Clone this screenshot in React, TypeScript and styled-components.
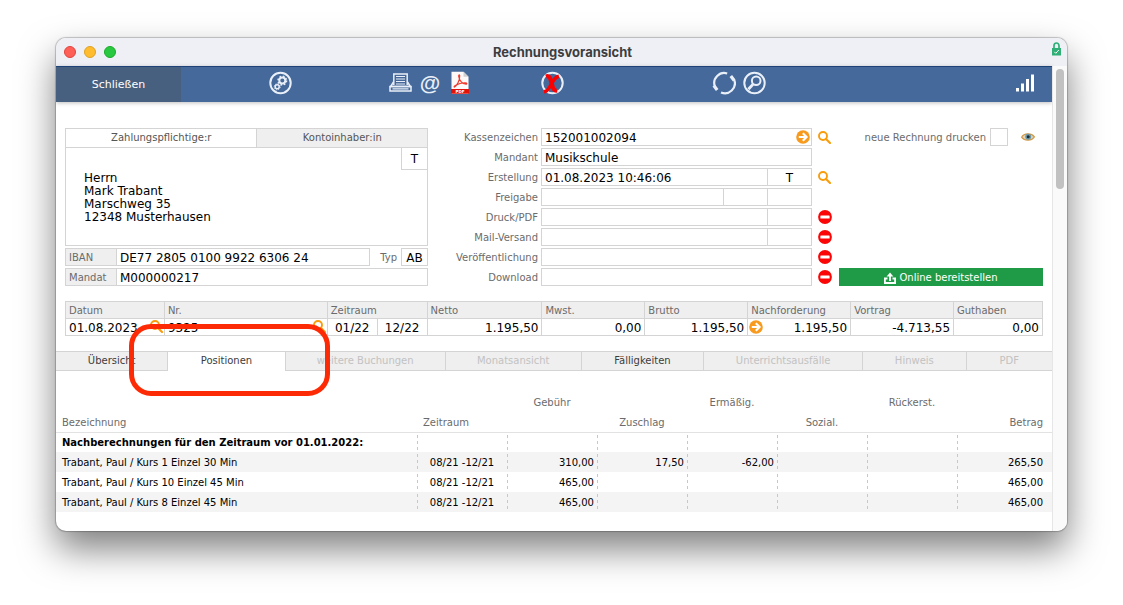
import React from "react";
import styled, { createGlobalStyle, css } from "styled-components";

const line = "#d4d4d4";
const panel = "#efefef";
const muted = "#6b6b6b";
const orange = "#f79a1e";

const GlobalStyle = createGlobalStyle`
  *, *::before, *::after { box-sizing: border-box; }
  body {
    margin: 0;
    background: #fff;
    color: #000;
    font: 10px/16px Verdana, "DejaVu Sans", sans-serif;
  }
  button, input, textarea { font: inherit; color: inherit; margin: 0; padding: 0; border-radius: 0; }
  button { border: 0; background: none; cursor: pointer; }
  svg { display: block; }
`;

const Desktop = styled.div`
  padding: 38px 56px 74px;
`;

const Window = styled.div`
  border-radius: 10px;
  overflow: hidden;
  background: #fff;
  box-shadow: 0 0 1px 1px rgba(0, 0, 0, 0.22), 0 18px 36px rgba(0, 0, 0, 0.5);
`;

const TitleBar = styled.header`
  display: grid;
  grid-template-columns: 1fr auto 1fr;
  align-items: center;
  height: 28px;
  padding: 0 6px 0 8px;
  background: #eff0f5;
`;

const Lights = styled.div`
  display: flex;
  gap: 8px;
`;

const Light = styled.button<{ $fill: string; $edge: string }>`
  width: 12px;
  height: 12px;
  border: 1px solid ${(p) => p.$edge};
  border-radius: 50%;
  background: ${(p) => p.$fill};
`;

const Title = styled.h1`
  margin: 0;
  font: 700 13px/16px Inter, sans-serif;
  color: #3d3d3f;
`;

const LockSlot = styled.div`
  justify-self: end;
  align-self: start;
  padding-top: 4px;
`;

const Body = styled.div`
  display: flex;
`;

const Main = styled.main`
  flex: 1;
  min-width: 0;
  padding-bottom: 19px;
`;

const ScrollTrack = styled.div`
  width: 15px;
  padding: 3px;
  border-left: 1px solid #e6e6e6;
  background: #fafafa;
`;

const ScrollThumb = styled.div`
  width: 8px;
  height: 120px;
  border-radius: 4px;
  background: #c1c1c1;
`;

const Toolbar = styled.div`
  display: flex;
  align-items: center;
  height: 36px;
  padding-right: 12px;
  border-top: 1px solid #1f4277;
  background: #44699a;
  color: #e9eff8;
  box-shadow: 0 1px 4px rgba(0, 0, 0, 0.25);
`;

const CloseButton = styled.button`
  width: 125px;
  height: 100%;
  background: #48607f;
  color: #fff;
  font-size: 11px;
`;

const ToolButton = styled.button`
  display: grid;
  place-items: center;
  width: 30px;
  height: 30px;
  padding-bottom: 4px;
`;

const AtGlyph = styled.span`
  font: 700 21px/24px "Liberation Sans", Arial, sans-serif;
`;

const Spacer = styled.div<{ $grow: number }>`
  flex: ${(p) => p.$grow} 1 0;
`;

const Form = styled.section`
  display: grid;
  grid-template-columns: 363fr 411fr 204fr;
  padding: 26px 9px 0;
`;

const Stack = styled.div`
  display: flex;
  flex-direction: column;
  gap: 2px;
  min-width: 0;
`;

const PayerBox = styled.div`
  height: 118px;
  border: 1px solid ${line};
`;

const PayerTabs = styled.div`
  display: flex;
  height: 19px;
  border-bottom: 1px solid ${line};
`;

const PayerTab = styled.button<{ $active?: boolean }>`
  flex: ${(p) => (p.$active ? 191 : 170)};
  color: #555;
  ${(p) => !p.$active && css`background: ${panel}; border-left: 1px solid ${line};`}
`;

const AddressArea = styled.div`
  display: flex;
  align-items: flex-start;
`;

const Address = styled.textarea`
  flex: 1;
  min-width: 0;
  height: 96px;
  padding: 24px 0 0 18px;
  border: 0;
  outline: 0;
  resize: none;
  font-size: 12px;
  line-height: 13px;
  white-space: pre;
`;

const AddressType = styled.button`
  width: 26px;
  height: 22px;
  border: solid ${line};
  border-width: 0 0 1px 1px;
  font-size: 12px;
`;

const Row = styled.div`
  display: flex;
  align-items: center;
  height: 18px;
`;

const BoxLabel = styled.label`
  width: 51px;
  height: 18px;
  padding: 1px 0 0 3px;
  border: solid ${line};
  border-width: 1px 0 1px 1px;
  background: ${panel};
  color: ${muted};
`;

const TypeLabel = styled.label`
  width: 31px;
  padding: 2px 4px 0 0;
  text-align: right;
  color: ${muted};
`;

const Field = styled.input<{ $w?: number; $center?: boolean }>`
  flex: ${(p) => (p.$w ? `0 0 ${p.$w}px` : "1 1 0")};
  min-width: 0;
  height: 18px;
  padding: 2px 3px 0;
  border: 1px solid ${line};
  outline: 0;
  background: #fff;
  font-size: 12px;
  text-align: ${(p) => (p.$center ? "center" : "left")};
  & + & { margin-left: -1px; }
`;

const FieldWrap = styled.div`
  position: relative;
  display: flex;
  flex: 1;
  min-width: 0;
`;

const FieldAction = styled.button`
  position: absolute;
  top: 2px;
  right: 2px;
`;

const RowLabel = styled.label`
  width: 113px;
  padding: 2px 3px 0 0;
  text-align: right;
  color: ${muted};
`;

const IconSlot = styled.div`
  display: grid;
  place-items: center;
  width: 27px;
  padding-right: 2px;
`;

const SideColumn = styled.div`
  display: flex;
  flex-direction: column;
  justify-content: space-between;
`;

const PrintRow = styled.div`
  display: flex;
  align-items: center;
  justify-content: flex-end;
  height: 18px;
  padding-right: 8px;
  color: ${muted};
`;

const PrintLabel = styled.label`
  padding-top: 2px;
`;

const CheckBox = styled.input`
  appearance: none;
  width: 18px;
  height: 18px;
  margin: 0 13px 0 4px;
  border: 1px solid ${line};
  background: #fff;
`;

const PublishButton = styled.button`
  display: flex;
  align-items: center;
  justify-content: center;
  gap: 3px;
  height: 18px;
  padding-top: 1px;
  background: #1f9b48;
  color: #fff;
`;

const Sums = styled.div`
  padding: 15px 9px 0;
`;

const SumTable = styled.table`
  width: 100%;
  table-layout: fixed;
  border-collapse: collapse;
  th, td { padding: 0 3px; border: 1px solid ${line}; }
  th {
    height: 17px;
    padding-top: 1px;
    line-height: 15px;
    background: ${panel};
    color: ${muted};
    font-weight: 400;
    text-align: left;
  }
  td { height: 17px; font-size: 12px; line-height: 16px; white-space: nowrap; }
`;

const Cell = styled.div<{ $align?: string }>`
  display: flex;
  align-items: center;
  justify-content: ${(p) => p.$align ?? "space-between"};
  height: 16px;
  padding-top: 1px;
`;

const CellIcon = styled.button<{ $side: "left" | "right" }>`
  margin-${(p) => p.$side}: -2px;
  padding-bottom: 2px;
`;

const Tabs = styled.nav`
  display: flex;
  height: 20px;
  margin-top: 15px;
`;

const TabSlot = styled.div<{ $grow: number }>`
  position: relative;
  display: flex;
  flex: ${(p) => p.$grow} 1 0;
  min-width: 0;
  & + & { border-left: 1px solid ${line}; }
`;

const Tab = styled.button<{ $state?: "active" | "off" }>`
  flex: 1;
  min-width: 0;
  border: solid ${line};
  border-width: 1px 0 ${(p) => (p.$state === "active" ? 0 : 1)}px;
  background: ${(p) => (p.$state === "active" ? "#fff" : panel)};
  color: ${(p) => (p.$state === "off" ? "#c2c2c2" : "#3c3c3c")};
  line-height: 16px;
  padding-bottom: ${(p) => (p.$state === "active" ? 1 : 0)}px;
`;

const Marker = styled.span`
  position: absolute;
  z-index: 2;
  inset: -27px -45px -25px -39px;
  border: 5px solid #fd2b05;
  border-radius: 22px;
  pointer-events: none;
`;

const Items = styled.table`
  width: 100%;
  margin-top: 20px;
  table-layout: fixed;
  border-collapse: collapse;
  th, td { padding: 0 6px; white-space: nowrap; }
  thead th {
    height: 41px;
    padding-top: 4px;
    padding-bottom: 1px;
    border-bottom: 1px solid #e2e2e2;
    color: ${muted};
    font-weight: 400;
  }
  tbody tr:nth-child(even) { background: #f4f4f4; }
  td { height: 20px; }
  td:first-child { padding-top: 2px; text-align: left; }
  td + td {
    padding: 2px 3px 0;
    text-align: right;
    background: repeating-linear-gradient(to bottom, #c8c8c8 0 3px, transparent 3px 6px) 0 2px / 1px 17px no-repeat;
  }
  td:nth-child(2) { text-align: center; }
  td:last-child { padding-right: 9px; }
`;

const HeadCell = styled.th<{ $low?: boolean; $align?: string }>`
  vertical-align: ${(p) => (p.$low ? "bottom" : "top")};
  text-align: ${(p) => p.$align ?? "center"};
  &:last-child { padding-right: 9px; }
`;

const Magnifier = () => (
  <svg width="13" height="13" viewBox="0 0 13 13" fill="none" stroke="#f99d0c">
    <circle cx="5" cy="5" r="4" strokeWidth="1.9" />
    <path d="M8 8l4 4" strokeWidth="2.200" strokeLinecap="round" />
  </svg>
);

const ArrowBadge = () => (
  <svg width="14" height="14" viewBox="0 0 14 14">
    <circle cx="7" cy="7" r="6.8" fill={orange} />
    <path d="M2.800 7h7.400M6.800 3.200L10.600 7 6.800 10.800" fill="none" stroke="#fff" strokeWidth="2.100" />
  </svg>
);

const NoEntry = () => (
  <svg width="14" height="14" viewBox="0 0 14 14">
    <circle cx="7" cy="7" r="6.900" fill="#fb0606" />
    <rect x="2.400" y="5.600" width="9.200" height="3" rx=".4" fill="#fff" />
  </svg>
);

const Eye = () => (
  <svg width="14" height="10" viewBox="0 0 14 10">
    <path d="M.6 5.2C3 .8 10.500.8 13.400 4.800 10.500 9.200 3.500 9.200.6 5.200z" fill="#e0d6c0" stroke="#d19a4a" strokeWidth="1.200" />
    <circle cx="7.200" cy="4.700" r="3" fill="#6a98a8" />
    <circle cx="7.200" cy="4.700" r="1.500" fill="#1c2b30" />
  </svg>
);

const Lock = () => (
  <svg width="9" height="14" viewBox="0 0 9 14">
    <path d="M2 7V3.800a2.500 2.800 0 0 1 5 0V7" fill="none" stroke="#2fae76" strokeWidth="1.700" />
    <rect y="6" width="9" height="7.500" fill="#2fae76" />
    <path d="M2.300 9.800l1.500 1.500 3-3.300" fill="none" stroke="#fff" strokeWidth="1" />
  </svg>
);

const Upload = () => (
  <svg width="12" height="12" viewBox="0 0 12 12" fill="none" stroke="#fff" strokeWidth="1.800">
    <path d="M3.500 6.500H.9V11h10.200V6.500H8.500" />
    <path d="M6 9V3" />
    <path d="M2.600 4.500L6 .6l3.400 3.900z" fill="#fff" stroke="none" />
  </svg>
);

const Gears = () => (
  <svg width="24" height="24" viewBox="0 0 24 24" fill="none" stroke="currentColor">
    <circle cx="12.500" cy="12" r="10.200" strokeWidth="2" />
    <circle cx="14.300" cy="9.600" r="3" strokeWidth="2" />
    <circle cx="14.300" cy="9.600" r="4.300" strokeWidth="1.500" strokeDasharray="1.700 1.680" />
    <circle cx="9.200" cy="15.800" r="2" strokeWidth="1.500" />
    <circle cx="9.200" cy="15.800" r="3" strokeWidth="1" strokeDasharray="1.200 1.150" />
  </svg>
);

const PrinterIcon = () => (
  <svg width="24" height="24" viewBox="0 0 24 24" fill="none" stroke="currentColor" strokeWidth="1.500">
    <path d="M5.800 14V3h13.400v11" />
    <path d="M8 5.500h9M8 8h9M8 10.500h9M8 13h9" strokeWidth="1.200" />
    <path d="M5.500 11L2.600 15.500h19.800L19.500 11" />
    <rect x="2" y="15.500" width="21" height="4.500" />
    <path d="M4.500 17.800h16" strokeWidth="1.200" />
  </svg>
);

const PdfLabel = styled.text`
  font: 700 4px "DejaVu Sans", sans-serif;
  fill: #fff;
`;

const PdfIcon = () => (
  <svg width="20" height="24" viewBox="0 0 20 24">
    <path d="M1.500.8h12l5 5V23h-17z" fill="#fdf9f8" />
    <path d="M13.500.8v5h5z" fill="#cfcfcf" />
    <path d="M4.500 16c2.500-1.500 5.500-6.500 5.200-11.500C9.500 3.500 8.500 4 8.700 5.500c.5 3.500 3.300 7.500 7.300 7.700 1.300 0 1-1.300-.5-1.400-3.500-.2-7 .8-10.200 2.700-1.500 1-1.300 1.800-.8 1.500z" fill="none" stroke="#ef3b2d" strokeWidth="1.200" />
    <path d="M1 18h18v4.800H1z" fill="#e3120b" />
    <PdfLabel x="10" y="22" textAnchor="middle">PDF</PdfLabel>
  </svg>
);

const CancelIcon = () => (
  <svg width="24" height="24" viewBox="0 0 24 24" fill="none">
    <circle cx="12.500" cy="12" r="10.200" stroke="currentColor" strokeWidth="2" />
    <path d="M6 5.500c3.500-1.500 4.500 2 6 8 1 4.500 2 6.500 5 6" stroke="#fa0000" strokeWidth="4.200" />
    <path d="M18.800 5.200c-3.500.5-5.500 4-8.300 9.300-1.700 3.300-3 6-6.500 6.300" stroke="#fa0000" strokeWidth="3.400" />
  </svg>
);

const RefreshIcon = () => (
  <svg width="24" height="24" viewBox="0 0 24 24" fill="none" stroke="currentColor" strokeWidth="2.200">
    <path d="M15.200 2.500A10 10 0 0 0 2.700 15" />
    <path d="M9 21.500A10 10 0 0 0 22.300 9" />
    <path d="M18.800 5l3.400 4.500M5.200 19L1.800 14.500" strokeWidth="3.200" />
  </svg>
);

const SearchCircle = () => (
  <svg width="24" height="24" viewBox="0 0 24 24" fill="none" stroke="currentColor">
    <circle cx="12.500" cy="12" r="10.200" strokeWidth="2" />
    <circle cx="14.200" cy="9.800" r="4.300" strokeWidth="2" />
    <path d="M11 13.200l-4.600 5" strokeWidth="2.800" />
  </svg>
);

const Signal = () => (
  <svg width="20" height="20" viewBox="0 0 20 20" fill="#fff">
    <path d="M1 15h3v3.500H1zM6 10.500h3v8H6zM11 6h3v12.500h-3zM16 1.500h3v17h-3z" />
  </svg>
);

type FieldRow = { label: string; value?: string; extra?: string[]; icon?: "search" | "stop"; go?: boolean };

const fieldRows: FieldRow[] = [
  { label: "Kassenzeichen", value: "152001002094", icon: "search", go: true },
  { label: "Mandant", value: "Musikschule" },
  { label: "Erstellung", value: "01.08.2023 10:46:06", extra: ["T"], icon: "search" },
  { label: "Freigabe", extra: ["", ""] },
  { label: "Druck/PDF", extra: [""], icon: "stop" },
  { label: "Mail-Versand", extra: [""], icon: "stop" },
  { label: "Veröffentlichung", icon: "stop" },
  { label: "Download", icon: "stop" },
];

const tabs: { label: string; grow: number; state?: "active" | "off" }[] = [
  { label: "Übersicht", grow: 112 },
  { label: "Positionen", grow: 117, state: "active" },
  { label: "weitere Buchungen", grow: 160, state: "off" },
  { label: "Monatsansicht", grow: 136, state: "off" },
  { label: "Fälligkeiten", grow: 122 },
  { label: "Unterrichtsausfälle", grow: 159, state: "off" },
  { label: "Hinweis", grow: 103, state: "off" },
  { label: "PDF", grow: 86, state: "off" },
];

const sumCols = [99, 163, 50, 50, 115, 103, 103, 103, 103, 89];
const itemCols = [361, 90, 90, 90, 90, 90, 90, 95];

const items = [
  ["Trabant, Paul / Kurs 1 Einzel 30 Min", "08/21 -12/21", "310,00", "17,50", "-62,00", "", "", "265,50"],
  ["Trabant, Paul / Kurs 10 Einzel 45 Min", "08/21 -12/21", "465,00", "", "", "", "", "465,00"],
  ["Trabant, Paul / Kurs 8 Einzel 45 Min", "08/21 -12/21", "465,00", "", "", "", "", "465,00"],
];

const percentCols = (widths: number[]) => {
  const total = widths.reduce((a, b) => a + b, 0);
  return (
    <colgroup>
      {widths.map((w, i) => (
        <col key={i} style={{ width: `${(w / total) * 100}%` }} />
      ))}
    </colgroup>
  );
};

export default function App() {
  return (
    <Desktop>
      <GlobalStyle />
      <Window>
        <TitleBar>
          <Lights>
            <Light aria-label="Fenster schließen" $fill="#fe5f57" $edge="#e0443e" />
            <Light aria-label="Minimieren" $fill="#febc2e" $edge="#dea123" />
            <Light aria-label="Maximieren" $fill="#28c840" $edge="#1aab29" />
          </Lights>
          <Title>Rechnungsvoransicht</Title>
          <LockSlot><Lock /></LockSlot>
        </TitleBar>
        <Body>
          <Main>
            <Toolbar>
              <CloseButton>Schließen</CloseButton>
              <Spacer $grow={84} />
              <ToolButton aria-label="Einstellungen"><Gears /></ToolButton>
              <Spacer $grow={90} />
              <ToolButton aria-label="Drucken"><PrinterIcon /></ToolButton>
              <ToolButton aria-label="E-Mail"><AtGlyph>@</AtGlyph></ToolButton>
              <ToolButton aria-label="PDF erzeugen"><PdfIcon /></ToolButton>
              <Spacer $grow={62} />
              <ToolButton aria-label="Stornieren"><CancelIcon /></ToolButton>
              <Spacer $grow={142} />
              <ToolButton aria-label="Aktualisieren"><RefreshIcon /></ToolButton>
              <ToolButton aria-label="Suchen"><SearchCircle /></ToolButton>
              <Spacer $grow={241} />
              <ToolButton aria-label="Statistik"><Signal /></ToolButton>
            </Toolbar>

            <Form>
              <Stack>
                <PayerBox>
                  <PayerTabs>
                    <PayerTab $active>Zahlungspflichtige:r</PayerTab>
                    <PayerTab>Kontoinhaber:in</PayerTab>
                  </PayerTabs>
                  <AddressArea>
                    <Address
                      aria-label="Anschrift"
                      defaultValue={"Herrn\nMark Trabant\nMarschweg 35\n12348 Musterhausen"}
                    />
                    <AddressType>T</AddressType>
                  </AddressArea>
                </PayerBox>
                <Row>
                  <BoxLabel htmlFor="iban">IBAN</BoxLabel>
                  <Field id="iban" defaultValue="DE77 2805 0100 9922 6306 24" />
                  <TypeLabel htmlFor="typ">Typ</TypeLabel>
                  <Field id="typ" $w={27} $center defaultValue="AB" />
                </Row>
                <Row>
                  <BoxLabel htmlFor="mandat">Mandat</BoxLabel>
                  <Field id="mandat" defaultValue="M000000217" />
                </Row>
              </Stack>

              <Stack>
                {fieldRows.map((row, i) => (
                  <Row key={row.label}>
                    <RowLabel htmlFor={`field-${i}`}>{row.label}</RowLabel>
                    <FieldWrap>
                      <Field id={`field-${i}`} defaultValue={row.value ?? ""} />
                      {row.extra?.map((v, k) => (
                        <Field key={k} aria-label={`${row.label} ${k + 2}`} $w={45} $center defaultValue={v} />
                      ))}
                      {row.go && <FieldAction aria-label="Öffnen"><ArrowBadge /></FieldAction>}
                    </FieldWrap>
                    <IconSlot>
                      {row.icon === "search" && <button aria-label={`${row.label} suchen`}><Magnifier /></button>}
                      {row.icon === "stop" && <NoEntry />}
                    </IconSlot>
                  </Row>
                ))}
              </Stack>

              <SideColumn>
                <PrintRow>
                  <PrintLabel htmlFor="print-new">neue Rechnung drucken</PrintLabel>
                  <CheckBox id="print-new" type="checkbox" />
                  <button aria-label="Vorschau"><Eye /></button>
                </PrintRow>
                <PublishButton><Upload />Online bereitstellen</PublishButton>
              </SideColumn>
            </Form>

            <Sums>
              <SumTable>
                {percentCols(sumCols)}
                <thead>
                  <tr>
                    <th>Datum</th>
                    <th>Nr.</th>
                    <th colSpan={2}>Zeitraum</th>
                    <th>Netto</th>
                    <th>Mwst.</th>
                    <th>Brutto</th>
                    <th>Nachforderung</th>
                    <th>Vortrag</th>
                    <th>Guthaben</th>
                  </tr>
                </thead>
                <tbody>
                  <tr>
                    <td><Cell>01.08.2023<CellIcon $side="right" aria-label="Datum suchen"><Magnifier /></CellIcon></Cell></td>
                    <td><Cell>9325<CellIcon $side="right" aria-label="Nummer suchen"><Magnifier /></CellIcon></Cell></td>
                    <td><Cell $align="center">01/22</Cell></td>
                    <td><Cell $align="center">12/22</Cell></td>
                    <td><Cell $align="flex-end">1.195,50</Cell></td>
                    <td><Cell $align="flex-end">0,00</Cell></td>
                    <td><Cell $align="flex-end">1.195,50</Cell></td>
                    <td><Cell><CellIcon $side="left" aria-label="Nachforderung öffnen"><ArrowBadge /></CellIcon>1.195,50</Cell></td>
                    <td><Cell $align="flex-end">-4.713,55</Cell></td>
                    <td><Cell $align="flex-end">0,00</Cell></td>
                  </tr>
                </tbody>
              </SumTable>
            </Sums>

            <Tabs>
              {tabs.map((t) => (
                <TabSlot key={t.label} $grow={t.grow}>
                  <Tab $state={t.state} disabled={t.state === "off"}>{t.label}</Tab>
                  {t.state === "active" && <Marker />}
                </TabSlot>
              ))}
            </Tabs>

            <Items>
              {percentCols(itemCols)}
              <thead>
                <tr>
                  <HeadCell $low $align="left">Bezeichnung</HeadCell>
                  <HeadCell $low $align="left">Zeitraum</HeadCell>
                  <HeadCell>Gebühr</HeadCell>
                  <HeadCell $low>Zuschlag</HeadCell>
                  <HeadCell>Ermäßig.</HeadCell>
                  <HeadCell $low>Sozial.</HeadCell>
                  <HeadCell>Rückerst.</HeadCell>
                  <HeadCell $low $align="right">Betrag</HeadCell>
                </tr>
              </thead>
              <tbody>
                <tr>
                  <td><b>Nachberechnungen für den Zeitraum vor 01.01.2022:</b></td>
                  {itemCols.slice(1).map((_, i) => <td key={i} />)}
                </tr>
                {items.map((row) => (
                  <tr key={row[0]}>
                    {row.map((v, i) => <td key={i}>{v}</td>)}
                  </tr>
                ))}
              </tbody>
            </Items>
          </Main>
          <ScrollTrack><ScrollThumb /></ScrollTrack>
        </Body>
      </Window>
    </Desktop>
  );
}
